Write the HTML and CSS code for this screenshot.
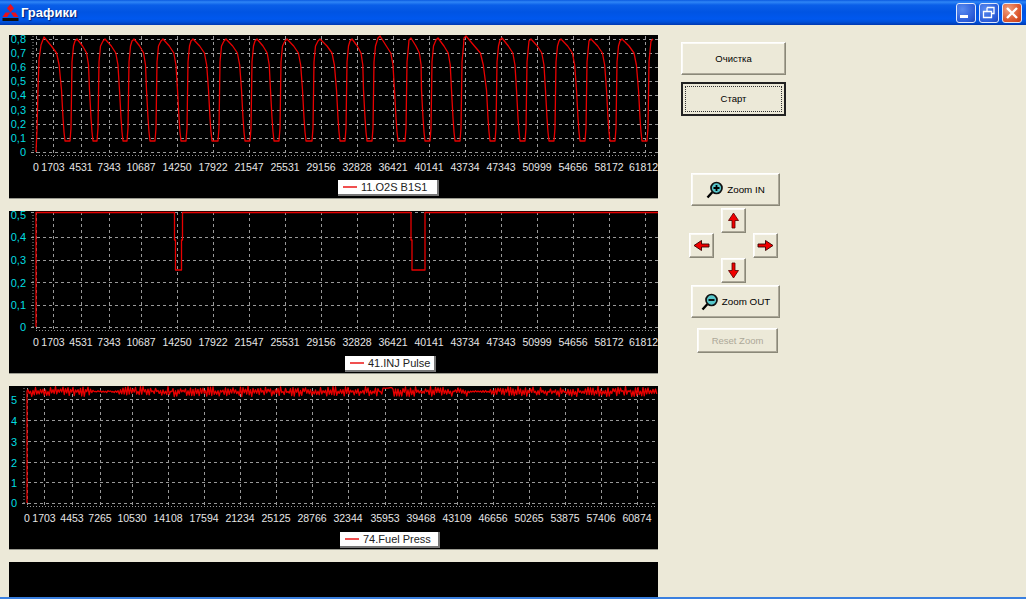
FILE: index.html
```html
<!DOCTYPE html>
<html>
<head>
<meta charset="utf-8">
<title>Графики</title>
<link rel="stylesheet" href="styles.css">
<script src="charts.js"></script>
</head>
<body>
<div class="window">
	<div class="titlebar">
		<svg class="app-icon" width="17" height="17" viewBox="0 0 17 17">
			<path d="M8.5 0L12 4.2L8.5 8.5L5 4.2Z M8.2 8.5H3.5L.5 13H5.2Z M8.8 8.5H13.5L16.5 13H11.8Z" fill="#e8101c"/>
			<rect x=".5" y="14" width="16" height="3" fill="#111"/>
		</svg>
		<span class="title">Графики</span>
		<div class="win-buttons">
			<div class="win-btn">
				<svg width="18" height="18" viewBox="0 0 18 18"><rect x="3" y="11" width="8" height="3" fill="#fff"/></svg>
			</div>
			<div class="win-btn">
				<svg width="18" height="18" viewBox="0 0 18 18"><path d="M7 3.5h7v6h-2 M3.5 7.5h8v6h-8z M7 3.5v4" fill="none" stroke="#fff" stroke-width="1.3"/></svg>
			</div>
			<div class="win-btn win-close">
				<svg width="18" height="18" viewBox="0 0 18 18"><path d="M4 4l10 10M14 4L4 14" stroke="#fff" stroke-width="2.4"/></svg>
			</div>
		</div>
	</div>
	<div class="main">
		<div class="charts">
			<div class="chart chart-tall">
				<svg id="c1" class="plot" viewBox="9 35 649 163">
					<g class="ticks-y">
						<text x="26" y="43">0,8</text><text x="26" y="57">0,7</text><text x="26" y="71">0,6</text><text x="26" y="85">0,5</text><text x="26" y="99">0,4</text><text x="26" y="114">0,3</text><text x="26" y="128">0,2</text><text x="26" y="142">0,1</text><text x="26" y="156">0</text>
					</g>
					<g class="ticks-x">
						<text x="36" y="171">0</text><text x="53" y="171">1703</text><text x="81" y="171">4531</text><text x="109" y="171">7343</text><text x="141" y="171">10687</text><text x="177" y="171">14250</text><text x="213" y="171">17922</text><text x="249" y="171">21547</text><text x="285" y="171">25531</text><text x="321" y="171">29156</text><text x="357" y="171">32828</text><text x="393" y="171">36421</text><text x="429" y="171">40141</text><text x="465" y="171">43734</text><text x="501" y="171">47343</text><text x="537" y="171">50999</text><text x="573" y="171">54656</text><text x="609" y="171">58172</text><text x="643.5" y="171">61812</text>
					</g>
				</svg>
				<div class="legend legend-1"><span class="legend-line"></span>11.O2S B1S1</div>
			</div>
			<div class="chart">
				<svg id="c2" class="plot" viewBox="9 211 649 162">
					<g class="ticks-y">
						<text x="26" y="219">0,5</text><text x="26" y="241">0,4</text><text x="26" y="264">0,3</text><text x="26" y="287">0,2</text><text x="26" y="309">0,1</text><text x="26" y="331">0</text>
					</g>
					<g class="ticks-x">
						<text x="36" y="346">0</text><text x="53" y="346">1703</text><text x="81" y="346">4531</text><text x="109" y="346">7343</text><text x="141" y="346">10687</text><text x="177" y="346">14250</text><text x="213" y="346">17922</text><text x="249" y="346">21547</text><text x="285" y="346">25531</text><text x="321" y="346">29156</text><text x="357" y="346">32828</text><text x="393" y="346">36421</text><text x="429" y="346">40141</text><text x="465" y="346">43734</text><text x="501" y="346">47343</text><text x="537" y="346">50999</text><text x="573" y="346">54656</text><text x="609" y="346">58172</text><text x="643.5" y="346">61812</text>
					</g>
				</svg>
				<div class="legend legend-2"><span class="legend-line"></span>41.INJ Pulse</div>
			</div>
			<div class="chart chart-tall">
				<svg id="c3" class="plot" viewBox="9 386 649 163">
					<g class="ticks-y">
						<text x="17" y="404">5</text><text x="17" y="425">4</text><text x="17" y="446">3</text><text x="17" y="467">2</text><text x="17" y="487">1</text><text x="17" y="507">0</text>
					</g>
					<g class="ticks-x">
						<text x="27" y="522">0</text><text x="44" y="522">1703</text><text x="72" y="522">4453</text><text x="100" y="522">7265</text><text x="132" y="522">10530</text><text x="168" y="522">14108</text><text x="204" y="522">17594</text><text x="240" y="522">21234</text><text x="276" y="522">25125</text><text x="312" y="522">28766</text><text x="348" y="522">32344</text><text x="385" y="522">35953</text><text x="421" y="522">39468</text><text x="457" y="522">43109</text><text x="493" y="522">46656</text><text x="529" y="522">50265</text><text x="565" y="522">53875</text><text x="601" y="522">57406</text><text x="637" y="522">60874</text>
					</g>
				</svg>
				<div class="legend legend-3"><span class="legend-line"></span>74.Fuel Press</div>
			</div>
			<div class="chart chart-empty"></div>
		</div>
		<div class="controls">
			<div class="btn btn-big">Очистка</div>
			<div class="btn btn-big btn-focus"><span class="focus-box">Старт</span></div>
			<div class="zoom-block">
				<div class="btn btn-zoom">
					<svg width="18" height="18" viewBox="0 0 18 18">
						<path d="M6.5 11L1.5 16.5" stroke="#000" stroke-width="2.4"/>
						<circle cx="10.5" cy="7" r="5.5" fill="#58c8cc" stroke="#111" stroke-width="1.7"/>
						<path d="M7.5 7h6M10.5 4v6" stroke="#000" stroke-width="1.8"/>
					</svg>
					Zoom IN
				</div>
				<div class="pad">
					<div class="btn btn-arrow pad-up">
						<svg width="13" height="17" viewBox="0 0 13 17"><path d="M6.5 1L11.5 8.5H8V16H5V8.5H1.5Z" fill="#f00000" stroke="#500" stroke-width=".8"/></svg>
					</div>
					<div class="btn btn-arrow pad-left">
						<svg width="17" height="13" viewBox="0 0 17 13"><path d="M1 6.5L8.5 1.5V5H16V8H8.5V11.5Z" fill="#f00000" stroke="#300" stroke-width=".9"/></svg>
					</div>
					<div class="btn btn-arrow pad-right">
						<svg width="17" height="13" viewBox="0 0 17 13"><path d="M16 6.5L8.5 1.5V5H1V8H8.5V11.5Z" fill="#f00000" stroke="#300" stroke-width=".9"/></svg>
					</div>
					<div class="btn btn-arrow pad-down">
						<svg width="13" height="17" viewBox="0 0 13 17"><path d="M6.5 16L11.5 8.5H8V1H5V8.5H1.5Z" fill="#f00000" stroke="#500" stroke-width=".8"/></svg>
					</div>
				</div>
				<div class="btn btn-zoom btn-zoom-out">
					<svg width="18" height="18" viewBox="0 0 18 18">
						<path d="M6.5 11L1.5 16.5" stroke="#000" stroke-width="2.4"/>
						<circle cx="10.5" cy="7" r="5.5" fill="#58c8cc" stroke="#111" stroke-width="1.7"/>
						<path d="M7.5 7h6" stroke="#000" stroke-width="1.8"/>
					</svg>
					Zoom OUT
				</div>
				<div class="btn btn-reset">Reset Zoom</div>
			</div>
		</div>
	</div>
	<div class="bottom-edge"></div>
</div>
</body>
</html>
```

FILE: styles.css
```css
*{ margin:0; padding:0; box-sizing:border-box;}
html,body{ height:100%; overflow:hidden;}
body{ background:#ece9d8; font-family:"Liberation Sans",Arial,sans-serif;}

.window{ height:599px; display:flex; flex-direction:column;}

.titlebar{ height:25px; flex:none; display:flex; align-items:center; padding:0 4px 0 2px; color:#fff;
	background:linear-gradient(to bottom,#0a5ae0 0,#2f86f6 2px,#0a5fe8 5px,#0054e3 12px,#0058ee 19px,#0050d8 22px,#0038b0 25px);}
.app-icon{ margin-right:2px;}
.title{ font:bold 13px "Liberation Sans",sans-serif; text-shadow:1px 1px 1px #0a1f70;}
.win-buttons{ margin-left:auto; display:flex; gap:3px;}
.win-btn{ width:20px; height:20px; border:1px solid #dfe8fb; border-radius:3px; display:flex; align-items:center; justify-content:center;
	background:radial-gradient(circle at 30% 30%,#5a8cf0,#2a5bd8 70%,#1c44b8);}
.win-close{ background:radial-gradient(circle at 30% 30%,#f0a080,#dd5a30 60%,#c23a14);}

.main{ flex:1; min-height:0; display:flex; overflow:hidden; padding:10px 0 0 9px;}

.charts{ width:649px; flex:none; display:flex; flex-direction:column; gap:13px;}
.chart{ position:relative; height:162px; flex:none; background:#000; box-shadow:0 1px 0 #9a9a90;}
.chart-tall{ height:163px;}
.chart-empty{ flex:1; height:auto; box-shadow:none;}
.plot{ display:block; width:649px; height:100%; overflow:visible;}
.ticks-y text{ fill:#00dce0; font-size:11px; text-anchor:end;}
.ticks-x text{ fill:#e6e6e6; font-size:10.5px; text-anchor:middle;}

.legend{ position:absolute; height:16px; display:flex; align-items:center; background:#fff; color:#222; font-size:11px;
	border-right:2px solid #777; border-bottom:2px solid #777; white-space:nowrap; padding-left:5px;}
.legend-line{ width:14px; height:2px; flex:none; background:#f05050; margin-right:4px;}
.legend-1{ left:329px; top:145px; width:101px;}
.legend-2{ left:336px; top:145px; width:91px;}
.legend-3{ left:331px; top:146px; width:100px;}

.controls{ margin:7px 0 0 23px; display:flex; flex-direction:column; align-items:flex-start; font-size:10px; color:#000;}
.btn{ display:flex; align-items:center; justify-content:center; background:#ece9d8; flex:none;
	border:1px solid; border-color:#fff #8a8878 #8a8878 #fff; box-shadow:inset -1px -1px 0 #aca899,inset 1px 1px 0 #fbfaf5;}
.btn-big{ width:105px; height:33px; font-size:9.5px;}
.btn-focus{ margin-top:7px; height:34px; border:2px solid #222; box-shadow:none; padding:2px;}
.focus-box{ width:100%; height:100%; display:flex; align-items:center; justify-content:center; border:1px dotted #333; padding-bottom:2px;}

.zoom-block{ margin:57px 0 0 8px; width:97px;}
.btn-zoom{ width:89px; height:33px; margin-left:2px; gap:3px; font-size:9.8px;}
.btn-zoom-out{ margin-top:2px;}
.pad{ margin-top:2px; display:grid; grid-template-columns:25px 25px 25px; column-gap:7px; grid-template-rows:25px 25px 25px;}
.btn-arrow{ width:25px; height:25px;}
.pad-up{ grid-column:2; grid-row:1;}
.pad-left{ grid-column:1; grid-row:2;}
.pad-right{ grid-column:3; grid-row:2;}
.pad-down{ grid-column:2; grid-row:3;}
.btn-reset{ width:81px; height:25px; margin:10px 0 0 8px; color:#aca899; font-size:9.5px;}

.bottom-edge{ height:2px; flex:none; background:#3a80e0;}
```

FILE: charts.js
```js
var NS='http://www.w3.org/2000/svg';

var GRID1=[53,81,109,141,177,213,249,285,321,357,393,429,465,501,537,573,609,645];
var GRID3=[44,72,100,132,168,204,240,276,312,348,385,421,457,493,529,565,601,637];

// [dip start, dip end, next peak, peak y]
var O2_CYCLES=[
	[65,70,77,39],[93,97,105,39],[123,127,134,39],[150,155,163,39],[181,186,193,39],
	[212,218,226,39],[245,250,257,39],[274,279,287,39],[306,312,320,39],[340,345,352,39],
	[367,372,380,36],[398,405,411,38],[425,430,438,38],[455,460,466,36],[490,495,502,38],
	[520,525,531,39],[549,554,561,39],[580,585,591,39],[610,615,622,39],[642,647,653,39]
];

function addPath(svg,d,cls)
{
	var p=document.createElementNS(NS,'path');
	p.setAttribute('d',d);
	p.setAttribute('class',cls);
	p.setAttribute('fill','none');
	if(cls=='grid'){ p.setAttribute('stroke','#999'); p.setAttribute('stroke-dasharray','3 3'); }
	if(cls=='minor'){ p.setAttribute('stroke','#999'); p.setAttribute('stroke-dasharray','1 2'); }
	if(cls=='trace'){ p.setAttribute('stroke','#e80000'); p.setAttribute('stroke-width','1.3'); p.setAttribute('stroke-linejoin','round'); }
	svg.insertBefore(p,svg.firstChild);
}

function drawGrid(svg,axis,xs,ys,top)
{
	var d='';
	var bottom=ys[ys.length-1];
	for(var i=0; i<ys.length; i++) d+='M'+(axis-5)+' '+(ys[i]+.5)+'H658';
	d+='M'+(axis+.5)+' '+top+'V'+(bottom+4);
	for(var j=0; j<xs.length; j++) d+='M'+(xs[j]+.5)+' '+top+'V'+(bottom+5);
	addPath(svg,d,'grid');
	var m='M'+(axis-3)+' '+top+'V'+bottom+'M'+axis+' '+(bottom+3.5)+'H655';
	addPath(svg,m,'minor');
}

function o2Trace()
{
	var d='M36 152L37 130L38 90L39 60L41 45L44 37';
	var prevPeak=44;
	for(var i=0; i<O2_CYCLES.length; i++)
	{
		var c=O2_CYCLES[i], ds=c[0], de=c[1], p=c[2], y=c[3];
		var w=ds-prevPeak;
		d+='L'+(prevPeak+w*.35)+' 46L'+(prevPeak+w*.6)+' 53L'+(prevPeak+w*.72)+' 65';
		d+='L'+(ds-3.5)+' 90L'+(ds-2)+' 118L'+(ds-1)+' 132L'+ds+' 141L'+de+' 141';
		d+='L'+(de+1)+' 128L'+(de+1.5)+' 95L'+(de+2)+' 62L'+(de+3.5)+' 46L'+(p-2)+' '+(y+2)+'L'+p+' '+y;
		prevPeak=p;
	}
	return d;
}

function injTrace()
{
	return 'M36 327V212.5H174.5V240H175.5V270H181.5V240H182.5V212.5H411V240H412V270H425V212.5H658';
}

function fuelTrace()
{
	var d='M27 503V391';
	var seed=12345;
	var i=0;
	for(var x=28; x<657; x+=1.25)
	{
		seed=(seed*1103515+12345)%2147483648;
		var r=seed/2147483648;
		var amp=5;
		if((x>93 && x<118)||(x>470 && x<490)) amp=1;
		var y=391.5+(i%2 ? r : -r)*amp;
		if(x>382 && x<392) y=387.5+r;
		d+='L'+x+' '+y.toFixed(1);
		i++;
	}
	return d;
}

window.onload=function()
{
	var c1=document.getElementById('c1');
	var c2=document.getElementById('c2');
	var c3=document.getElementById('c3');
	addPath(c1,o2Trace(),'trace');
	drawGrid(c1,36,GRID1,[39,53,67,81,95,110,124,138,152],36);
	addPath(c2,injTrace(),'trace');
	drawGrid(c2,36,GRID1,[212,237,260,282,305,327],212);
	addPath(c3,fuelTrace(),'trace');
	drawGrid(c3,27,GRID3,[399,420,441,462,482,503],388);
}
```
